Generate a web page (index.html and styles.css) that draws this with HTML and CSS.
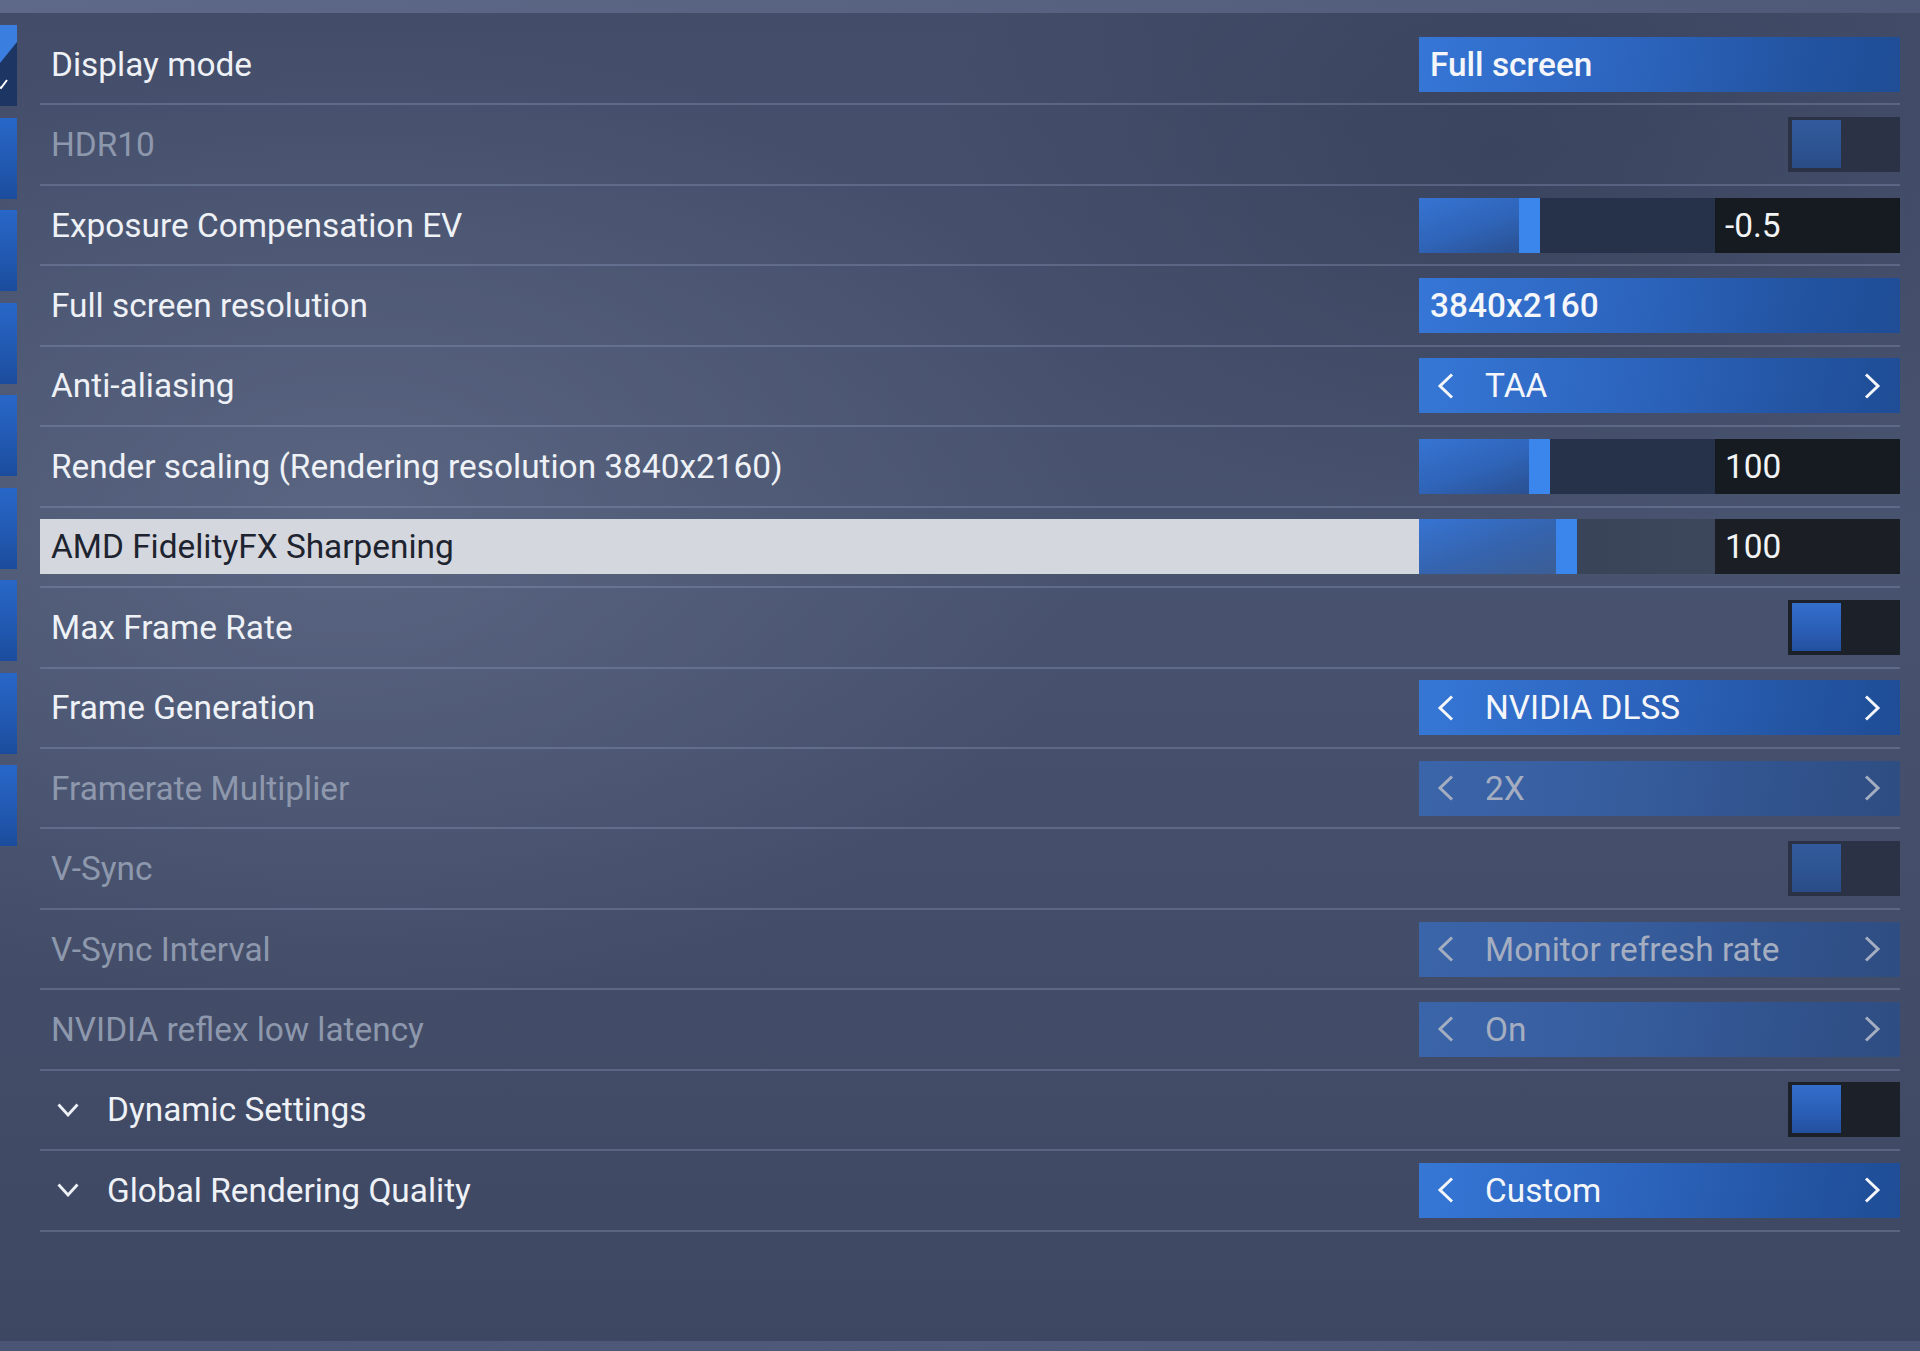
FILE: index.html
```html
<!DOCTYPE html>
<html lang="en">
<head>
<meta charset="utf-8">
<title>Graphics settings</title>
<link rel="stylesheet" href="styles.css">
</head>
<body>
<div class="topbar"></div>
<div class="main">
  <div class="tabs">
    <div class="tab tab-active">
      <svg width="17" height="81" viewBox="0 0 17 81">
        <rect x="0" y="0" width="17" height="81" fill="#3a7fe0"/>
        <polygon points="0,38 17,17 17,81 0,81" fill="#1c3562"/>
        <polyline points="-1,62 1,63 7,55" fill="none" stroke="#ffffff" stroke-width="2"/>
      </svg>
    </div>
    <div class="tab"></div>
    <div class="tab"></div>
    <div class="tab"></div>
    <div class="tab"></div>
    <div class="tab"></div>
    <div class="tab"></div>
    <div class="tab"></div>
    <div class="tab"></div>
  </div>

  <div class="list">
    <div class="row">
      <div class="label">Display mode</div>
      <div class="ctrl value">Full screen</div>
    </div>

    <div class="row disabled">
      <div class="label">HDR10</div>
      <div class="ctrl-slot"><div class="toggle"><div class="knob"></div></div></div>
    </div>

    <div class="row">
      <div class="label">Exposure Compensation EV</div>
      <div class="ctrl slider">
        <div class="fill" style="width:100px"></div>
        <div class="handle"></div>
        <div class="track"></div>
        <div class="num">-0.5</div>
      </div>
    </div>

    <div class="row">
      <div class="label">Full screen resolution</div>
      <div class="ctrl value">3840x2160</div>
    </div>

    <div class="row">
      <div class="label">Anti-aliasing</div>
      <div class="ctrl select">
        <svg class="chev" width="18" height="26" viewBox="0 0 18 26"><polyline points="15,1.5 3,13 15,24.5"/></svg>
        <span class="sel-text">TAA</span>
        <svg class="chev chev-right" width="18" height="26" viewBox="0 0 18 26"><polyline points="3,1.5 15,13 3,24.5"/></svg>
      </div>
    </div>

    <div class="row">
      <div class="label">Render scaling (Rendering resolution 3840x2160)</div>
      <div class="ctrl slider">
        <div class="fill" style="width:110px"></div>
        <div class="handle"></div>
        <div class="track"></div>
        <div class="num">100</div>
      </div>
    </div>

    <div class="row highlight">
      <div class="label">AMD FidelityFX Sharpening</div>
      <div class="ctrl slider">
        <div class="fill" style="width:137px"></div>
        <div class="handle"></div>
        <div class="track"></div>
        <div class="num">100</div>
      </div>
    </div>

    <div class="row">
      <div class="label">Max Frame Rate</div>
      <div class="ctrl-slot"><div class="toggle"><div class="knob"></div></div></div>
    </div>

    <div class="row">
      <div class="label">Frame Generation</div>
      <div class="ctrl select">
        <svg class="chev" width="18" height="26" viewBox="0 0 18 26"><polyline points="15,1.5 3,13 15,24.5"/></svg>
        <span class="sel-text">NVIDIA DLSS</span>
        <svg class="chev chev-right" width="18" height="26" viewBox="0 0 18 26"><polyline points="3,1.5 15,13 3,24.5"/></svg>
      </div>
    </div>

    <div class="row disabled">
      <div class="label">Framerate Multiplier</div>
      <div class="ctrl select">
        <svg class="chev" width="18" height="26" viewBox="0 0 18 26"><polyline points="15,1.5 3,13 15,24.5"/></svg>
        <span class="sel-text">2X</span>
        <svg class="chev chev-right" width="18" height="26" viewBox="0 0 18 26"><polyline points="3,1.5 15,13 3,24.5"/></svg>
      </div>
    </div>

    <div class="row disabled">
      <div class="label">V-Sync</div>
      <div class="ctrl-slot"><div class="toggle"><div class="knob"></div></div></div>
    </div>

    <div class="row disabled">
      <div class="label">V-Sync Interval</div>
      <div class="ctrl select">
        <svg class="chev" width="18" height="26" viewBox="0 0 18 26"><polyline points="15,1.5 3,13 15,24.5"/></svg>
        <span class="sel-text">Monitor refresh rate</span>
        <svg class="chev chev-right" width="18" height="26" viewBox="0 0 18 26"><polyline points="3,1.5 15,13 3,24.5"/></svg>
      </div>
    </div>

    <div class="row disabled">
      <div class="label">NVIDIA reflex low latency</div>
      <div class="ctrl select">
        <svg class="chev" width="18" height="26" viewBox="0 0 18 26"><polyline points="15,1.5 3,13 15,24.5"/></svg>
        <span class="sel-text">On</span>
        <svg class="chev chev-right" width="18" height="26" viewBox="0 0 18 26"><polyline points="3,1.5 15,13 3,24.5"/></svg>
      </div>
    </div>

    <div class="row">
      <div class="label section">
        <svg class="sec-chev" width="22" height="14" viewBox="0 0 22 14"><polyline points="1.5,1.5 11,12 20.5,1.5"/></svg>
        <span>Dynamic Settings</span>
      </div>
      <div class="ctrl-slot"><div class="toggle"><div class="knob"></div></div></div>
    </div>

    <div class="row">
      <div class="label section">
        <svg class="sec-chev" width="22" height="14" viewBox="0 0 22 14"><polyline points="1.5,1.5 11,12 20.5,1.5"/></svg>
        <span>Global Rendering Quality</span>
      </div>
      <div class="ctrl select">
        <svg class="chev" width="18" height="26" viewBox="0 0 18 26"><polyline points="15,1.5 3,13 15,24.5"/></svg>
        <span class="sel-text">Custom</span>
        <svg class="chev chev-right" width="18" height="26" viewBox="0 0 18 26"><polyline points="3,1.5 15,13 3,24.5"/></svg>
      </div>
    </div>
  </div>
</div>
<div class="bottombar"></div>
</body>
</html>
```

FILE: styles.css
```css
html, body {
  margin: 0;
  padding: 0;
}

body {
  width: 1920px;
  height: 1351px;
  overflow: hidden;
  font-family: Roboto, "Liberation Sans", sans-serif;
  color: #eef1f6;
  background:
    radial-gradient(ellipse 1000px 650px at 350px 520px, rgba(104, 116, 146, 0.55), rgba(104, 116, 146, 0) 75%),
    radial-gradient(ellipse 700px 500px at 1500px 150px, rgba(40, 48, 72, 0.35), rgba(40, 48, 72, 0) 80%),
    linear-gradient(180deg, #434d69 0%, #48536f 40%, #3e4762 100%);
}

.topbar {
  height: 13px;
  background: linear-gradient(90deg, #5e698a, #56617f 60%, #4e5977);
}

.bottombar {
  height: 10px;
  background: linear-gradient(90deg, #4a5474, #4f5a7b 50%, #4a5474);
}

.main {
  height: 1328px;
  box-sizing: border-box;
  padding-top: 12px;
  display: flex;
  gap: 23px;
}

.tabs {
  width: 17px;
  display: flex;
  flex-direction: column;
  gap: 11.5px;
}

.tab {
  width: 17px;
  height: 81px;
  background: linear-gradient(180deg, #2867c8 0%, #2158b0 60%, #1b4c9c 100%);
}

.tab-active {
  background: none;
}

.tab-active svg {
  display: block;
}

.list {
  width: 1860px;
}

.row {
  height: 80.44px;
  box-sizing: border-box;
  border-bottom: 2px solid rgba(150, 165, 200, 0.3);
  display: flex;
  align-items: center;
}

.label {
  flex: 1;
  height: 55px;
  line-height: 55px;
  font-size: 33.4px;
  padding-left: 11px;
  color: #eef1f6;
  white-space: nowrap;
}

.row.disabled .label {
  color: #8e98ad;
}

.row.highlight .label {
  background: #d4d7dd;
  color: #1e2330;
}

.label.section {
  display: flex;
  align-items: center;
  padding-left: 17px;
}

.sec-chev {
  margin-right: 28px;
}

.sec-chev polyline {
  fill: none;
  stroke: #eef1f6;
  stroke-width: 2.8;
}

.ctrl,
.ctrl-slot {
  width: 481px;
  height: 55px;
  flex: none;
  box-sizing: border-box;
}

.ctrl-slot {
  display: flex;
  justify-content: flex-end;
}

.value {
  background: linear-gradient(100deg, #3676d6 0%, #2c64bd 45%, #2253a0 80%, #1f4d96 100%);
  font-size: 33.4px;
  font-weight: 500;
  line-height: 55px;
  padding-left: 11px;
  color: #f4f6fa;
}

.select {
  display: flex;
  align-items: center;
  padding: 0 19px 0 18px;
  background: linear-gradient(100deg, #3677d6 0%, #2c64bd 45%, #2354a2 80%, #1f4d96 100%);
  font-size: 33.4px;
  color: #f4f6fa;
}

.chev polyline {
  fill: none;
  stroke: #f4f6fa;
  stroke-width: 3;
}

.sel-text {
  margin-left: 30px;
  line-height: 55px;
}

.chev-right {
  margin-left: auto;
}

.row.disabled .select {
  background: linear-gradient(100deg, #3b65aa 0%, #365c9c 45%, #30518a 80%, #2e4d82 100%);
  color: #a5aec1;
}

.row.disabled .chev polyline {
  stroke: #a5aec1;
}

.slider {
  display: flex;
}

.fill {
  height: 55px;
  flex: none;
  background: linear-gradient(160deg, #3674d3 0%, #2f64b8 55%, #2a5091 100%);
}

.handle {
  width: 21px;
  height: 55px;
  flex: none;
  background: #3b86ec;
}

.track {
  flex: 1;
  height: 55px;
  background: #26324a;
}

.num {
  width: 185px;
  height: 55px;
  flex: none;
  box-sizing: border-box;
  background: #161a21;
  font-size: 33.4px;
  line-height: 55px;
  padding-left: 10px;
  color: #f2f3f5;
}

.row.highlight .fill {
  background: linear-gradient(160deg, #3674d3 0%, #3563ad 55%, #3c5e95 100%);
}

.row.highlight .track {
  background: linear-gradient(90deg, #394459, #3c475b);
}

.row.highlight .num {
  background: #1b1e25;
}

.toggle {
  width: 112px;
  height: 55px;
  box-sizing: border-box;
  padding: 3px 0 0 4px;
  background: #1c2029;
}

.knob {
  width: 49px;
  height: 48px;
  background: linear-gradient(180deg, #336fcc 0%, #2a5db4 60%, #23509f 100%);
}

.row.disabled .toggle {
  background: #2b3246;
}

.row.disabled .knob {
  background: linear-gradient(180deg, #325a9c 0%, #2d5391 60%, #294c86 100%);
}
```
